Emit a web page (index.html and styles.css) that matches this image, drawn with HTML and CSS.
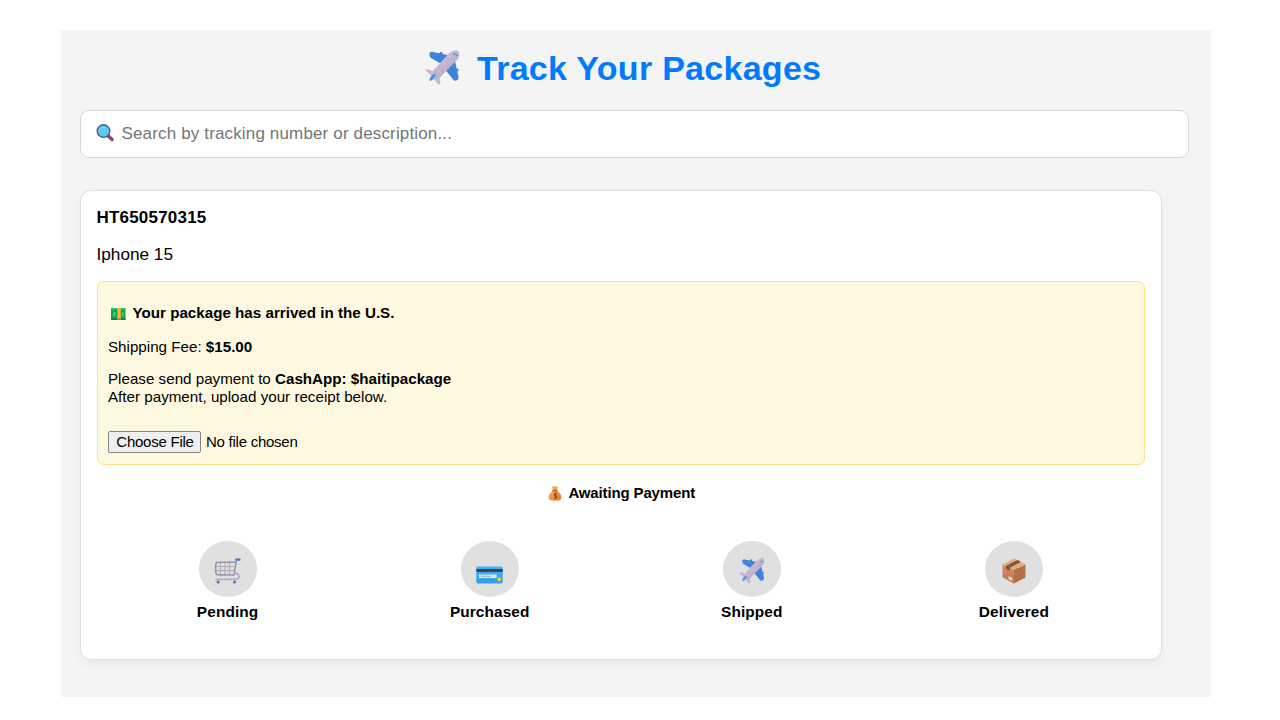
FILE: index.html
```html
<!DOCTYPE html>
<html lang="en">
<head>
<meta charset="utf-8">
<title>Track Your Packages</title>
<link rel="stylesheet" href="styles.css">
</head>
<body>
<svg class="defs" width="0" height="0" aria-hidden="true">
  <defs>
    <linearGradient id="body" x1="0" y1="0" x2="1" y2="1"><stop offset="0" stop-color="#d8cadf"/><stop offset="1" stop-color="#b09fbe"/></linearGradient>
    <linearGradient id="card" x1="0" y1="0" x2="0" y2="1"><stop offset="0" stop-color="#42b5ef"/><stop offset="1" stop-color="#2ba2e2"/></linearGradient>
    <linearGradient id="sack" x1="0" y1="0" x2="1" y2="1"><stop offset="0" stop-color="#ffc247"/><stop offset="1" stop-color="#e0702f"/></linearGradient>
    <linearGradient id="boxl" x1="0" y1="0" x2="0" y2="1"><stop offset="0" stop-color="#cf9068"/><stop offset="1" stop-color="#bd754b"/></linearGradient>
    <symbol id="plane" viewBox="0 0 36 36">
      <path d="M15 3l1.500-1.500L18 3v3h-3zM32 19l2.500.5-.2 2.200-2.300 1z" fill="#77717c"/>
      <path d="M5 2.800Q6 1.600 8 2L25 5.500 17 14.500 6.500 8.500Q3.800 6 5 2.800zM30.500 10l4 17.500Q35 31 31.500 31.500L29.500 31 19 18z" fill="#3f84dc"/>
      <path d="M.3 20.500l2.500-.7L10 22.500l4 4 2 6-.7 2.500-2 .3L9 29 5.500 25.500z" fill="#c7b5d3"/>
      <path d="M25 3Q29-.2 33.500.5 37 3.500 33.500 9.500L15 28.500Q10 31 7.300 29.800 5.500 26 8 21.500z" fill="url(#body)"/>
      <path d="M4.500 31Q4 29 7 26.500L10 24.200q1.500.3 1 2L8 30.300q-2.500 2-3.500.7z" fill="#3c99ec"/>
      <path d="M28.800 4.200l2.400-.8.600 1.200-2 .8zM31.800 5.500l1.500-.9.500 1.200-1.200 1z" fill="#249fc9"/>
    </symbol>
  </defs>
</svg>
<main class="panel">
  <h1 class="title"><svg class="title-icon"><use href="#plane"/></svg><span>Track Your Packages</span></h1>
  <div class="search">
    <svg class="search-icon" viewBox="0 0 18 18"><path d="M12 11.800l4 3.700" stroke="#87467f" stroke-width="3.600" stroke-linecap="round"/><circle cx="7.500" cy="7.100" r="6.300" fill="#5cc9ed" stroke="#425f9d" stroke-width="1.400"/><path d="M4.500 5q1.500-2 4-1.700" stroke="#8edcf3" stroke-width="1" fill="none"/></svg>
    <span class="placeholder">Search by tracking number or description...</span>
  </div>
  <section class="package">
    <h2 class="tracking">HT650570315</h2>
    <p class="description">Iphone 15</p>
    <div class="payment">
      <p class="arrived"><svg class="cash-icon" viewBox="0 0 15 12"><path d="M0 0h14.500v12H0z" fill="#16a653"/><path d="M0 0h14.500v1.500H0z" fill="#25cd6f"/><path d="M0 10.500h14.500V12H0z" fill="#088043"/><path d="M2.500 4h2v4h-2zM11 4h1.500v4H11z" fill="#61be82"/><path d="M6.500 0h3.200v12H6.500z" fill="#ffb92e"/><path d="M6.500 10h3.200v2H6.500z" fill="#ca852a"/></svg><strong>Your package has arrived in the U.S.</strong></p>
      <p class="fee"><span>Shipping Fee: </span><strong>$15.00</strong></p>
      <p class="send"><span>Please send payment to </span><strong>CashApp: $haitipackage</strong></p>
      <p class="after">After payment, upload your receipt below.</p>
      <div class="file"><button class="choose" type="button">Choose File</button><span class="nofile">No file chosen</span></div>
    </div>
    <p class="status"><svg class="sack-icon" viewBox="0 0 14 15"><path d="M5 4.500L3.800 1Q7-.7 10 1L8.800 4.500q4.700 3.300 4.500 7Q13 14.500 10 14.500H4Q.7 14.500.5 11.500.4 7.800 5 4.500z" fill="url(#sack)"/><path d="M4.500 4.600h4.800" stroke="#9f5134" stroke-width="1.300"/><path d="M8.700 7.500H6.500v2.200h2.200v2.200H6.200M7.500 6.500v6.500" stroke="#79513a" fill="none"/></svg><span>Awaiting Payment</span></p>
    <ol class="steps">
      <li class="step"><div class="bubble">
        <svg class="cart" viewBox="0 0 27 27"><path d="M2 8.500h18.500M2 12.700h18M6.500 4.500V17M11 4.500V17M15.500 4.500V17" fill="none" stroke="#b3acb7" stroke-width="1.200"/><path d="M24 1.500h-1.500L20 17H5Q1.700 17 1.700 14V7Q1.700 4.300 4 4.300H21.500" fill="none" stroke="#9a909f" stroke-width="1.500"/><path d="M2 21.300h19.500q3.500-.4 3.500-3.300-.3-2.200-4-2.500" fill="none" stroke="#b9aac6" stroke-width="1.800" stroke-linecap="round"/><path d="M22.500 1.600h3" stroke="#3f7bca" stroke-width="2.400" stroke-linecap="round"/><circle cx="4.200" cy="24" r="1.600" fill="#3d7fd1"/><circle cx="20.500" cy="24" r="1.600" fill="#3d7fd1"/></svg>
      </div><span class="label">Pending</span></li>
      <li class="step"><div class="bubble">
        <svg class="credit" viewBox="0 0 27 18"><rect x=".3" y=".5" width="26.400" height="17" rx="1.800" fill="url(#card)"/><path d="M.3 3h26.400v3H.3z" fill="#463e59"/><path d="M3 8.500h17.500v3.500H3z" fill="#e0e4e8"/><path d="M5 10.300h10" stroke="#a6a7ad"/><rect x="21.500" y="11.500" width="3.500" height="3.600" rx="1" fill="#f5c745"/></svg>
      </div><span class="label">Purchased</span></li>
      <li class="step"><div class="bubble">
        <svg class="small-plane"><use href="#plane"/></svg>
      </div><span class="label">Shipped</span></li>
      <li class="step"><div class="bubble">
        <svg class="parcel" viewBox="0 0 24 26"><path d="M.5 6.500L12 11.500V25.500L1.500 20Q.5 19.500.5 18.500z" fill="url(#boxl)"/><path d="M12 11.500L23.500 6.500v12q0 1-1 1.500L12 25.500z" fill="#b0704a"/><path d="M.5 6.500L11.500.8q.8-.3 1.500 0L23.500 6.500 12 11.500z" fill="#e2ad7a"/><path d="M4 8L15.500 1.900l3.500 1.800L8 9.700v3L4 10.900z" fill="#80513b"/><path d="M6.500 18l3.800 1.800V23l-3.800-1.800z" fill="#ded0e5"/></svg>
      </div><span class="label">Delivered</span></li>
    </ol>
  </section>
</main>
</body>
</html>
```
FILE: styles.css
```css
* { box-sizing: border-box; }
body { margin: 0; background: #fff; color: #000; font-family: "Liberation Sans", Arial, sans-serif; }
h1, h2, p, ol { margin: 0; padding: 0; }
ol { list-style: none; }
svg { display: block; flex: none; }
span, strong { white-space: pre; }
.defs { position: absolute; }
.panel { width: 1150px; height: 667px; margin: 30px 0 0 61px; padding: 18px 22px 0 19px; background: #f4f4f4; }
.title { display: flex; align-items: center; height: 41px; padding-left: 345px; gap: 17px; color: #007bff; font-size: 34px; line-height: 41px; letter-spacing: 0.28px; }
.title-icon { width: 35px; height: 35px; margin-top: -3px; }
.search { display: flex; height: 48px; margin-top: 21px; padding: 13px 16px 0 15px; gap: 7.5px; background: #fff; border: 1px solid #d3d5d5; border-radius: 9px; }
.search-icon { width: 18px; height: 18px; }
.placeholder { font-size: 17px; line-height: 20px; color: #757575; letter-spacing: 0.15px; }
.package { width: 1082px; height: 470px; margin-top: 32px; padding: 16px 16px 16px 15.5px; background: #fff; border: 1px solid #e0e0e0; border-radius: 11px; box-shadow: 0 4px 10px rgba(0, 0, 0, 0.05); }
.tracking { padding-top: 1px; font-size: 17px; line-height: 20px; letter-spacing: 0.2px; }
.description { margin-top: 16px; font-size: 17.2px; line-height: 20px; }
.payment { height: 184px; margin-top: 17px; padding: 22px 10.5px 0; background: #fff8e0; border: 1px solid #ffe082; border-radius: 7px; font-size: 15.18px; line-height: 18px; }
.arrived { display: flex; align-items: center; gap: 7px; padding-left: 2.5px; }
.cash-icon { width: 15px; height: 12px; margin-top: 2px; }
.fee { margin-top: 16px; }
.send { margin-top: 14px; }
.file { display: flex; align-items: center; gap: 5px; margin-top: 25px; }
.choose { width: 93px; height: 22px; padding: 0 0 0 1px; font: 15px/18px "Liberation Sans", Arial, sans-serif; letter-spacing: -0.25px; color: #000; background: #efefef; border: 1px solid #858585; border-radius: 2px; }
.nofile { font-size: 15px; letter-spacing: -0.25px; }
.status { display: flex; justify-content: center; align-items: center; gap: 6.5px; margin-top: 19px; font-size: 15px; font-weight: bold; line-height: 18px; letter-spacing: -0.14px; padding-left: 1.5px; }
.sack-icon { width: 14px; height: 15px; }
.steps { display: grid; grid-template-columns: repeat(4, 1fr); margin-top: 39px; }
.step { display: flex; flex-direction: column; align-items: center; }
.bubble { display: flex; align-items: center; justify-content: center; width: 58px; height: 56px; padding-top: 4px; background: #e0e0e0; border-radius: 50%; }
.label { margin-top: 5px; font-size: 15.4px; font-weight: bold; line-height: 20px; letter-spacing: 0.1px; }
.cart { width: 27px; height: 27px; }
.credit { width: 27px; height: 18px; margin-top: 7px; }
.small-plane { width: 26px; height: 26px; }
.parcel { width: 24px; height: 26px; }
```
